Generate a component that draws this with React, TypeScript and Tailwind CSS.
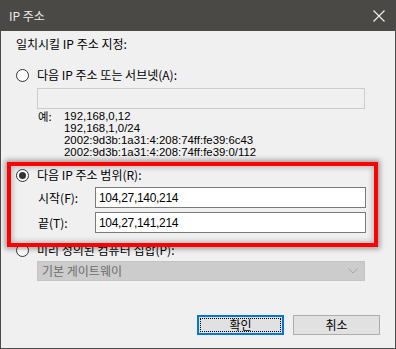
import React from 'react';

const ko = { fontFamily: '"Noto Sans CJK KR", "Noto Sans", sans-serif' };
const num = { fontFamily: '"Liberation Sans", Arial, sans-serif' };

function Radio({ checked }: { checked?: boolean }) {
  return (
    <span className="w-[13px] h-[13px] rounded-full border border-[#333333] bg-white flex items-center justify-center shrink-0">
      {checked && <span className="w-[7px] h-[7px] rounded-full bg-[#333333]" />}
    </span>
  );
}

export default function App() {
  return (
    <div className="w-[396px] h-[349px] bg-[#f0f0f0] border border-[#4a4a4a] flex flex-col text-[12px] text-black overflow-hidden" style={ko}>
      {/* title bar */}
      <div className="h-[30px] bg-[#4b4946] flex items-center justify-between pl-[8px] pr-[10px] shrink-0">
        <span className="text-[#ebebeb] text-[12px] leading-none">IP 주소</span>
        <svg width="12" height="12" viewBox="0 0 12 12">
          <path d="M0.5 0.5 L11.5 11.5 M11.5 0.5 L0.5 11.5" stroke="#f2f2f2" strokeWidth="1.1" />
        </svg>
      </div>

      <div className="relative flex-1 px-[15px] pt-[5px]">
        <div className="h-[16px] leading-[16px]">일치시킬 IP 주소 지정:</div>

        <div className="mt-[15px] h-[16px] flex items-center gap-[8px]">
          <Radio />
          <span className="leading-[16px]">다음 IP 주소 또는 서브넷(A):</span>
        </div>

        <div className="ml-[21px] mt-[5px] w-[328px] h-[21px] border border-[#cccccc] bg-[#f0f0f0]" />

        <div className="ml-[22px] mt-[1px] flex text-[11.4px] leading-[12px]" style={num}>
          <span className="w-[26px]" style={ko}>예:</span>
          <div className="flex flex-col">
            <span>192,168,0,12</span>
            <span>192,168,1,0/24</span>
            <span>2002:9d3b:1a31:4:208:74ff:fe39:6c43</span>
            <span>2002:9d3b:1a31:4:208:74ff:fe39:0/112</span>
          </div>
        </div>

        <div className="mt-[9px] h-[16px] flex items-center gap-[8px]">
          <Radio checked />
          <span className="leading-[16px]">다음 IP 주소 범위(R):</span>
        </div>

        <div className="mt-[4px] ml-[22px] flex flex-col gap-[4px]">
          <div className="flex items-center">
            <span className="w-[57px]">시작(F):</span>
            <div className="w-[271px] h-[21px] border border-[#7a7a7a] bg-white flex items-center pl-[3px] text-[12px] tracking-[-0.3px]" style={num}>
              104,27,140,214
            </div>
          </div>
          <div className="flex items-center">
            <span className="w-[57px]">끝(T):</span>
            <div className="w-[271px] h-[21px] border border-[#7a7a7a] bg-white flex items-center pl-[3px] text-[12px] tracking-[-0.3px]" style={num}>
              104,27,141,214
            </div>
          </div>
        </div>

        <div className="mt-[9px] h-[16px] flex items-center gap-[8px]">
          <Radio />
          <span className="leading-[16px]">미리 정의된 컴퓨터 집합(P):</span>
        </div>

        <div className="ml-[21px] mt-[3px] w-[328px] h-[20px] border border-[#c4c4c4] bg-[#cccccc] flex items-center justify-between pl-[4px] pr-[6px]">
          <span className="text-[#6d6d6d]">기본 게이트웨이</span>
          <svg width="10" height="6" viewBox="0 0 10 6">
            <path d="M0.5 0.5 L5 5 L9.5 0.5" fill="none" stroke="#a8a8a8" strokeWidth="1" />
          </svg>
        </div>

        <div className="mt-[34px] flex justify-end gap-[9px]">
          <button className="w-[87px] h-[20px] border-2 border-[#0078d7] bg-[#e1e1e1] p-[1px]">
            <span className="w-full h-full border border-dotted border-black flex items-center justify-center leading-none">확인</span>
          </button>
          <button className="w-[87px] h-[20px] border border-[#adadad] bg-[#e1e1e1] flex items-center justify-center leading-none">
            취소
          </button>
        </div>

        {/* red highlight box */}
        <div className="absolute left-[6px] top-[131px] w-[371px] h-[85px] border-4 border-[#ff0000] shadow-[0_0_5px_2px_rgba(0,0,0,0.35),inset_0_0_5px_2px_rgba(0,0,0,0.2)] pointer-events-none" />
      </div>
    </div>
  );
}
